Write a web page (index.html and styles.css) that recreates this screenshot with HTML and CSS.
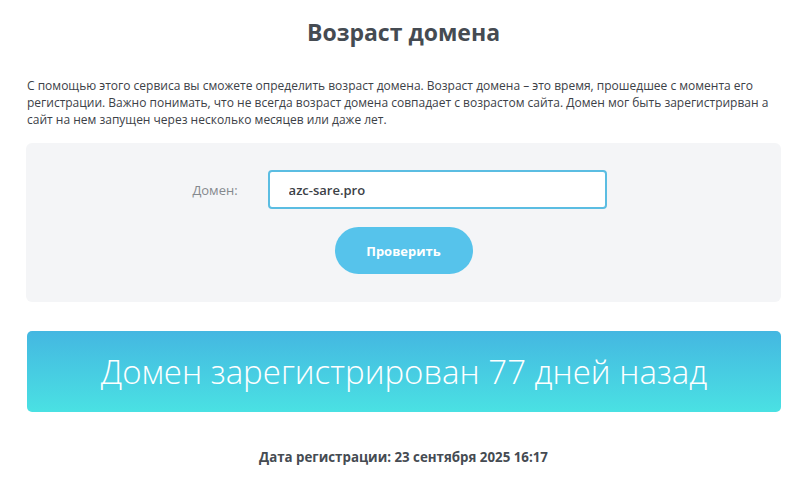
FILE: index.html
```html
<!DOCTYPE html>
<html lang="ru">
<head>
  <meta charset="UTF-8">
  <meta name="viewport" content="width=device-width, initial-scale=1.0">
  <title>Возраст домена</title>
  <link rel="stylesheet" href="styles.css">
</head>
<body>
  <div class="container">
    <h1>Возраст домена</h1>
    <p class="intro">С помощью этого сервиса вы сможете определить возраст домена. Возраст домена – это время, прошедшее с момента его регистрации. Важно понимать, что не всегда возраст домена совпадает с возрастом сайта. Домен мог быть зарегистрирван а сайт на нем запущен через несколько месяцев или даже лет.</p>

    <form class="check-box" onsubmit="return false;">
      <div class="field">
        <label for="domain">Домен:</label>
        <input type="text" id="domain" value="azc-sare.pro">
      </div>
      <button type="submit">Проверить</button>
    </form>

    <div class="result">Домен зарегистрирован 77 дней назад</div>
    <p class="reg-date">Дата регистрации: 23 сентября 2025 16:17</p>
  </div>
</body>
</html>
```

FILE: styles.css
```css
body {
  font-family: "Open Sans", Arial, sans-serif;
  margin: 0;
  padding: 0;
  background-color: #ffffff;
  color: #454b52;
}

.container {
  padding: 0 19px 0 26px;
}

h1 {
  margin: 0;
  padding-top: 17px;
  font-size: 23px;
  line-height: 30px;
  font-weight: 700;
  text-align: center;
  color: #454b52;
}

.intro {
  margin: 30px 0 0 1px;
  font-size: 12px;
  line-height: 17px;
  color: #3c4147;
}

.check-box {
  margin-top: 15px;
  height: 159px;
  box-sizing: border-box;
  padding-top: 27px;
  background-color: #f4f5f7;
  border-radius: 6px;
  display: flex;
  flex-direction: column;
  align-items: center;
}

.field {
  display: flex;
  align-items: center;
  gap: 30px;
  margin-left: -8px;
}

.field label {
  font-size: 13px;
  color: #85898e;
}

.field input {
  width: 339px;
  height: 39px;
  box-sizing: border-box;
  border: 2px solid #5bbde2;
  border-radius: 4px;
  padding: 0 19px;
  font-family: inherit;
  font-size: 13px;
  font-weight: 600;
  color: #3c4147;
  background-color: #ffffff;
  outline: none;
}

.check-box button {
  margin-top: 18px;
  width: 138px;
  height: 47px;
  border: none;
  border-radius: 24px;
  background-color: #56c3eb;
  color: #ffffff;
  font-family: inherit;
  font-size: 13px;
  font-weight: 700;
  cursor: pointer;
}

.result {
  margin: 29px 0 0 1px;
  height: 81px;
  border-radius: 5px;
  background: linear-gradient(to bottom, #44b7e1, #4ae1e3);
  color: #ffffff;
  font-size: 33px;
  font-weight: 300;
  display: flex;
  align-items: center;
  justify-content: center;
}

.reg-date {
  margin: 36px 0 0;
  text-align: center;
  font-size: 13.3px;
  font-weight: 700;
  color: #454b52;
}
```
